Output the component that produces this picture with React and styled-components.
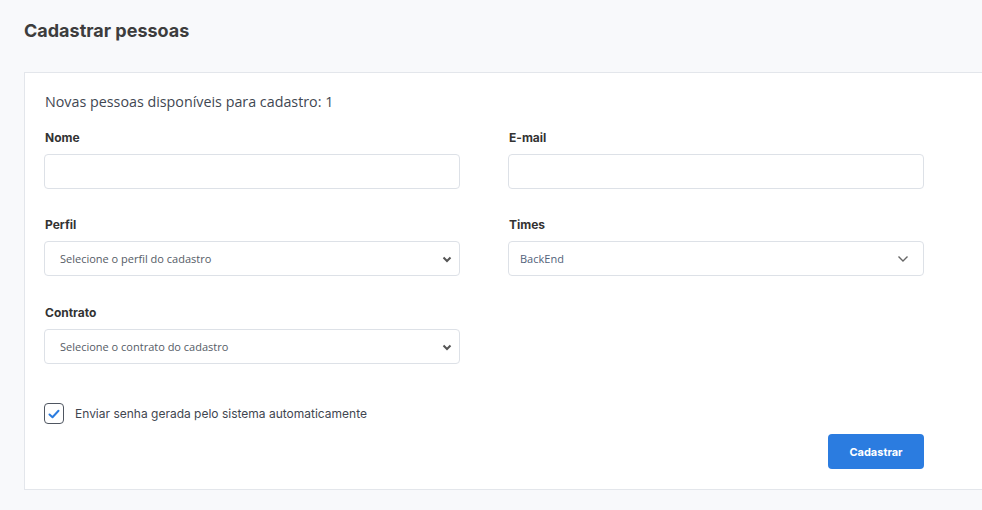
import React from "react";
import styled, { createGlobalStyle } from "styled-components";

const Global = createGlobalStyle`
  html, body { margin: 0; padding: 0; background: #f8f9fb; overflow: hidden; }
  * { box-sizing: border-box; }
`;

const Page = styled.div`
  width: 982px;
  height: 510px;
  padding: 20px 0 0 24px;
  background: #f8f9fb;
  overflow: hidden;
`;

const Title = styled.h1`
  margin: 0 0 30px;
  font-family: Inter, "Liberation Sans", sans-serif;
  font-weight: 700;
  font-size: 18px;
  line-height: 22px;
  color: #3d3d3d;
`;

const Card = styled.div`
  width: 1000px;
  background: #fff;
  border: 1px solid #e3e6eb;
  padding: 19px 19px 20px 19px;
`;

const Info = styled.p`
  margin: 0 0 18px 1px;
  font-family: "Open Sans", sans-serif;
  font-size: 14.3px;
  line-height: 20px;
  color: #3f4752;
`;

const Form = styled.div`
  width: 880px;
`;

const Grid = styled.div`
  display: grid;
  grid-template-columns: 416px 416px;
  column-gap: 48px;
  row-gap: 28px;
`;

const Field = styled.div`
  display: flex;
  flex-direction: column;
  gap: 8px;
  margin-top: ${(p) => p.$offset || 0}px;
`;

const Label = styled.label`
  padding-left: 1px;
  font-family: Inter, "Liberation Sans", sans-serif;
  font-weight: 700;
  font-size: 12px;
  line-height: 16px;
  color: #333;
`;

const Input = styled.div`
  height: 35px;
  border: 1px solid #dde1e7;
  border-radius: 4px;
  background: #fff;
`;

const Select = styled.div`
  height: 35px;
  border: 1px solid #dde1e7;
  border-radius: 4px;
  background: #fff;
  display: flex;
  align-items: center;
  justify-content: space-between;
  padding: 0 ${(p) => (p.$custom ? "14px" : "7px")} 0 ${(p) => (p.$custom ? "11px" : "15px")};
  font-family: "Open Sans", sans-serif;
  font-size: 11px;
  color: ${(p) => (p.$custom ? "#52627a" : "#555c66")};
`;

const CheckRow = styled.div`
  margin-top: 39px;
  display: flex;
  align-items: center;
  gap: 11px;
`;

const Box = styled.div`
  width: 20px;
  height: 21px;
  border: 1.5px solid #4f5661;
  border-radius: 4px;
  display: flex;
  align-items: center;
  justify-content: center;
`;

const CheckText = styled.span`
  font-family: Inter, "Liberation Sans", sans-serif;
  font-size: 12px;
  color: #3f4650;
`;

const Actions = styled.div`
  margin-top: 10px;
  display: flex;
  justify-content: flex-end;
`;

const Button = styled.button`
  width: 96px;
  height: 35px;
  border: none;
  border-radius: 4px;
  background: #2b7ce0;
  color: #fff;
  font-family: Inter, "Liberation Sans", sans-serif;
  font-weight: 700;
  font-size: 11px;
`;

const NativeChevron = () => (
  <svg width="10" height="8" viewBox="0 0 10 8">
    <path d="M1.5 2.5 L5 6 L8.5 2.5" fill="none" stroke="#555" strokeWidth="2" />
  </svg>
);

const ThinChevron = () => (
  <svg width="12" height="8" viewBox="0 0 12 8">
    <path d="M1.5 1.5 L6 6 L10.5 1.5" fill="none" stroke="#666" strokeWidth="1.4" />
  </svg>
);

export default function App() {
  return (
    <>
      <Global />
      <Page>
        <Title>Cadastrar pessoas</Title>
        <Card>
          <Info>Novas pessoas disponíveis para cadastro: 1</Info>
          <Form>
            <Grid>
              <Field>
                <Label>Nome</Label>
                <Input />
              </Field>
              <Field>
                <Label>E-mail</Label>
                <Input />
              </Field>
              <Field>
                <Label>Perfil</Label>
                <Select>
                  <span>Selecione o perfil do cadastro</span>
                  <NativeChevron />
                </Select>
              </Field>
              <Field>
                <Label>Times</Label>
                <Select $custom>
                  <span>BackEnd</span>
                  <ThinChevron />
                </Select>
              </Field>
              <Field $offset={1}>
                <Label>Contrato</Label>
                <Select>
                  <span>Selecione o contrato do cadastro</span>
                  <NativeChevron />
                </Select>
              </Field>
            </Grid>
            <CheckRow>
              <Box>
                <svg width="12" height="10" viewBox="0 0 12 10">
                  <path d="M1.5 5.5 L4.5 8.2 L10.5 1.8" fill="none" stroke="#2b7ce0" strokeWidth="2" strokeLinecap="round" strokeLinejoin="round" />
                </svg>
              </Box>
              <CheckText>Enviar senha gerada pelo sistema automaticamente</CheckText>
            </CheckRow>
            <Actions>
              <Button>Cadastrar</Button>
            </Actions>
          </Form>
        </Card>
      </Page>
    </>
  );
}
